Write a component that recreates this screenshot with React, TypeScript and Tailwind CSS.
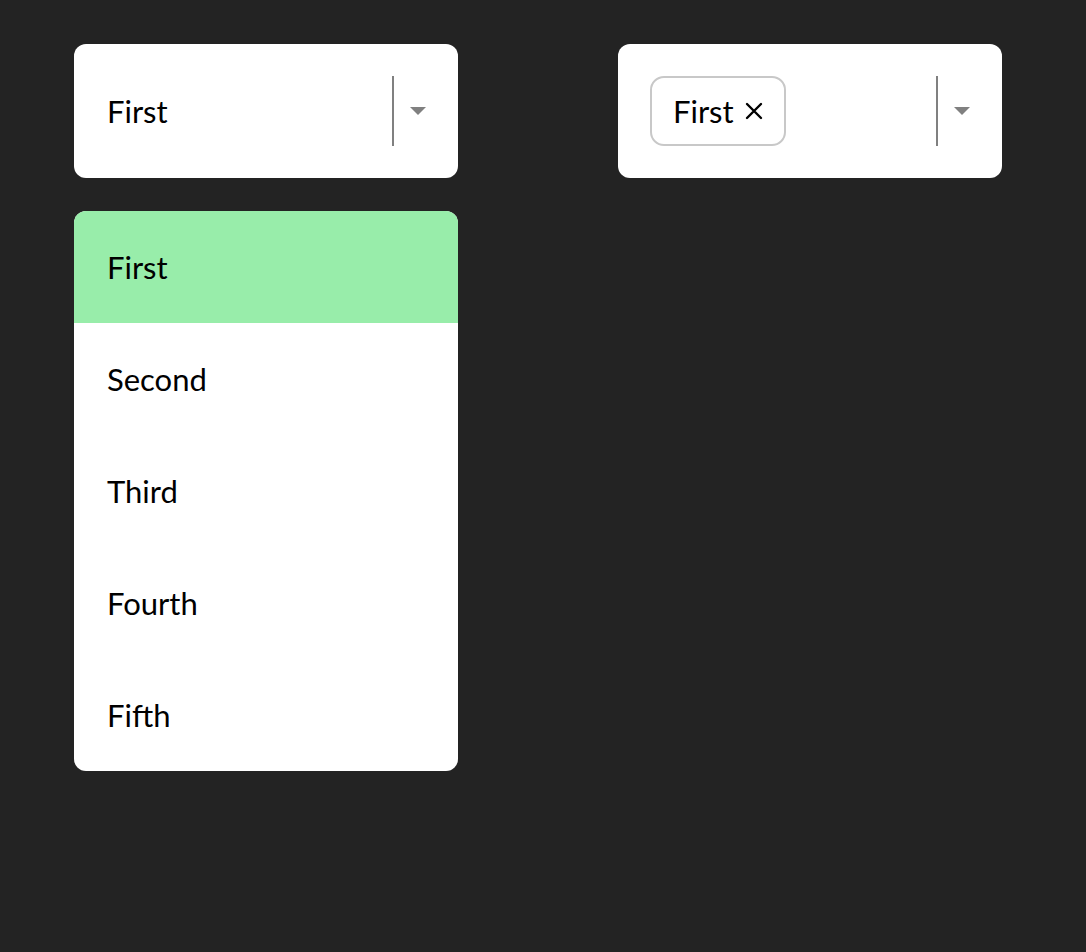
import React from 'react';

const options = ['First', 'Second', 'Third', 'Fourth', 'Fifth'];

function Caret() {
  return (
    <div className="flex h-full items-center pl-[16px] pr-[32px]">
      <svg width="16" height="8" viewBox="0 0 16 8">
        <polygon points="0,0 16,0 8,8" fill="#808080" />
      </svg>
    </div>
  );
}

function Divider() {
  return <div className="h-[70px] w-[2px] bg-[#808080]" />;
}

function SingleSelect() {
  return (
    <div className="flex h-[134px] w-[384px] items-center rounded-[12px] bg-white">
      <div className="flex-1 pl-[33px] text-[31px] text-black">First</div>
      <Divider />
      <Caret />
    </div>
  );
}

function MultiSelect() {
  return (
    <div className="flex h-[134px] w-[384px] items-center rounded-[12px] bg-white">
      <div className="flex flex-1 pl-[32px]">
        <div className="flex h-[70px] items-center gap-[11px] rounded-[14px] border-2 border-[#c8c8c8] pl-[21px] pr-[21px] text-[31px] text-black">
          <span>First</span>
          <svg width="18" height="18" viewBox="0 0 18 18">
            <path d="M2 2 L16 16 M16 2 L2 16" stroke="#000" strokeWidth="2.4" strokeLinecap="round" />
          </svg>
        </div>
      </div>
      <Divider />
      <Caret />
    </div>
  );
}

function OptionList() {
  return (
    <div className="w-[384px] overflow-hidden rounded-[12px] bg-white">
      {options.map((o, i) => (
        <div
          key={o}
          className={`flex h-[112px] items-center pl-[33px] text-[31px] text-black ${i === 0 ? 'bg-[#98edaa]' : ''}`}
        >
          {o}
        </div>
      ))}
    </div>
  );
}

export default function App() {
  return (
    <div
      className="min-h-screen bg-[#232323] pl-[74px] pt-[44px]"
      style={{ fontFamily: 'Lato, "Noto Sans", sans-serif' }}
    >
      <div className="flex gap-[160px]">
        <div className="flex flex-col gap-[33px]">
          <SingleSelect />
          <OptionList />
        </div>
        <div>
          <MultiSelect />
        </div>
      </div>
    </div>
  );
}
